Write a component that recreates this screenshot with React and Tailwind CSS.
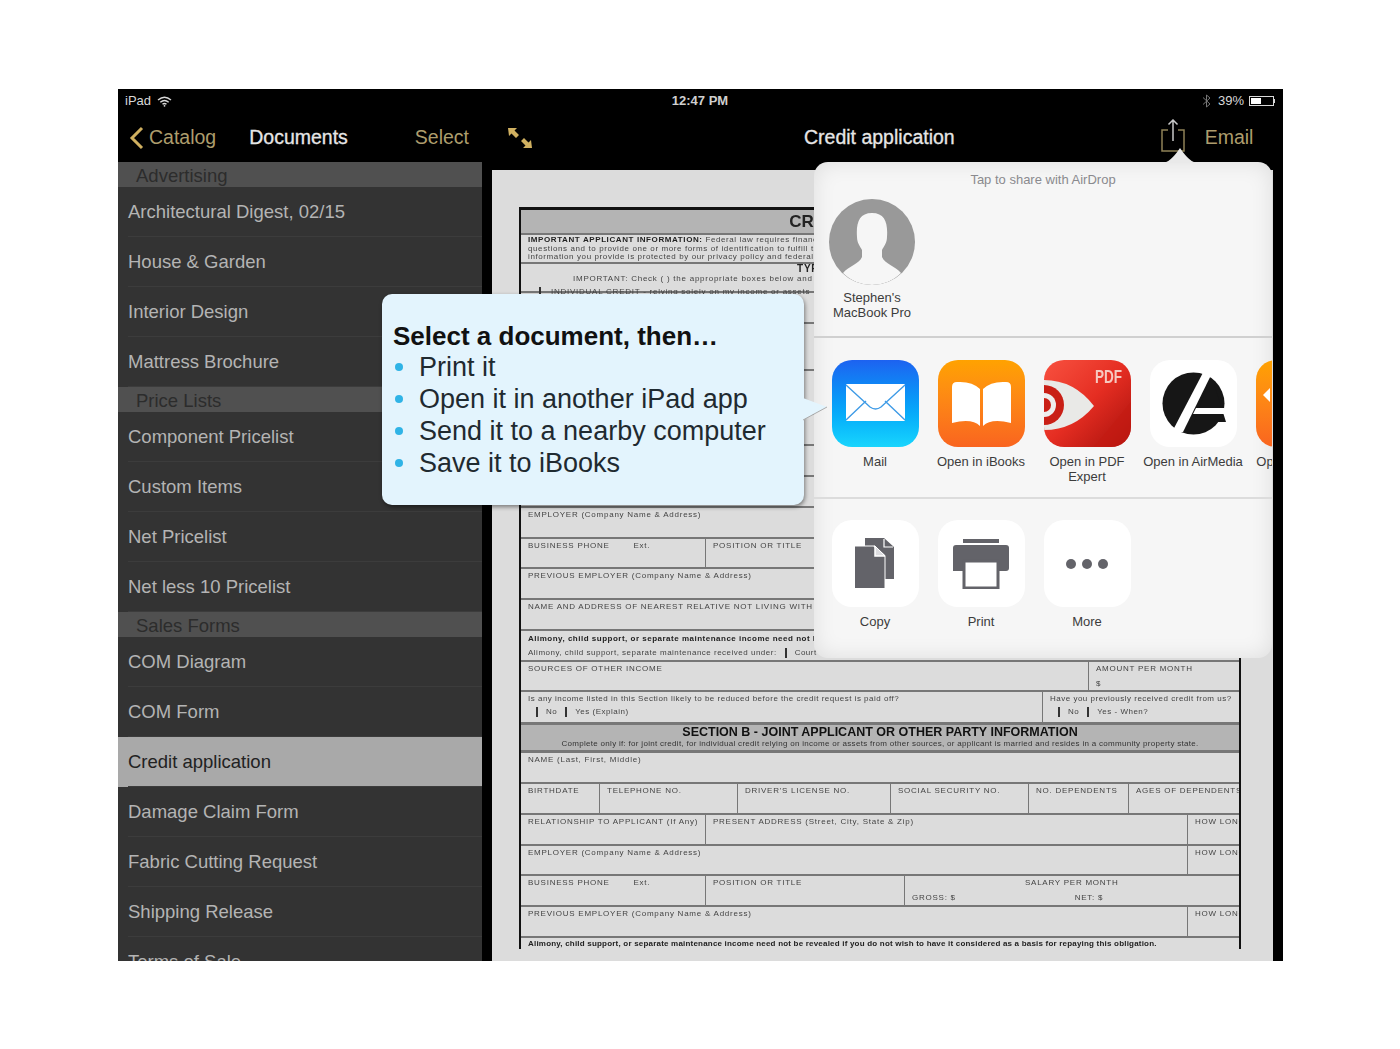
import React from "react";

const font = { fontFamily: '"Liberation Sans", Arial, sans-serif' };

const sidebar = [
  { section: "Advertising" },
  { label: "Architectural Digest, 02/15" },
  { label: "House & Garden" },
  { label: "Interior Design" },
  { label: "Mattress Brochure" },
  { section: "Price Lists" },
  { label: "Component Pricelist" },
  { label: "Custom Items" },
  { label: "Net Pricelist" },
  { label: "Net less 10 Pricelist" },
  { section: "Sales Forms" },
  { label: "COM Diagram" },
  { label: "COM Form" },
  { label: "Credit application", selected: true },
  { label: "Damage Claim Form" },
  { label: "Fabric Cutting Request" },
  { label: "Shipping Release" },
  { label: "Terms of Sale" },
];

const bullets = ["Print it", "Open it in another iPad app", "Send it to a nearby computer", "Save it to iBooks"];

const MailIcon = () => (
  <div className="h-[87px] w-[87px] overflow-hidden rounded-[20px] bg-gradient-to-b from-[#1d62f0] to-[#19d5fd]">
    <svg viewBox="0 0 87 87" className="h-full w-full">
      <rect x="14" y="24" width="59" height="37" rx="1" fill="#fff" />
      <path d="M14 25 L38 47 Q43.5 51 49 47 L73 25 M14 60 L34 41 M73 60 L53 41" fill="none" stroke="#3f9be6" strokeWidth="1.4" />
    </svg>
  </div>
);

const BooksIcon = () => (
  <div className="h-[87px] w-[87px] overflow-hidden rounded-[20px] bg-gradient-to-b from-[#ffa200] to-[#f9641f]">
    <svg viewBox="0 0 87 87" className="h-full w-full">
      <path d="M14 27 Q14 22 19 22 Q34 21 42 29 L42 66 Q34 58 14 63 Z" fill="#fff" />
      <path d="M73 27 Q73 22 68 22 Q53 21 45 29 L45 66 Q53 58 73 63 Z" fill="#fff" />
    </svg>
  </div>
);

const PdfIcon = () => (
  <div className="relative h-[87px] w-[87px] overflow-hidden rounded-[20px] bg-gradient-to-br from-[#f8503f] via-[#e52d22] to-[#a80f0b]">
    <svg viewBox="0 0 87 87" className="absolute inset-0 h-full w-full">
      <path d="M50 87 L87 42 L87 87 Z" fill="#c51a12" opacity="0.6" />
      <path d="M0 20 Q30 20 50 46 Q30 70 0 70 Z" fill="#e9e9e7" />
      <path d="M0 25 A20 20 0 0 1 0 65 Z" fill="#c91f16" />
      <path d="M0 33 A12 12 0 0 1 0 57 Z" fill="#eee" />
      <path d="M0 38 A7 7 0 0 1 0 52 Z" fill="#c91f16" />
    </svg>
    <span className="absolute right-[9px] top-[8px] text-[18px] font-bold leading-none text-[#f6c9c0] [transform:scaleX(0.75)] [transform-origin:right]">PDF</span>
  </div>
);

const AirMediaIcon = () => (
  <div className="h-[87px] w-[87px] overflow-hidden rounded-[20px] bg-white">
    <svg viewBox="0 0 87 87" className="h-full w-full">
      <circle cx="43.5" cy="43.5" r="31" fill="#161616" />
      <path d="M57 5 L66 5 L33 72 L22 72 Z" fill="#fff" />
      <path d="M58 24 L64 24 L76 62 L44 62 Z" fill="#161616" />
      <path d="M46 48 L74 48 L74 54 L43 54 Z" fill="#fff" />
    </svg>
  </div>
);

const FifthIcon = () => (
  <div className="relative h-[87px] w-[87px] overflow-hidden rounded-[20px] bg-gradient-to-b from-[#ffa200] to-[#f9641f]">
    <svg viewBox="0 0 87 87" className="absolute inset-0 h-full w-full">
      <path d="M7 35 L14 28 L14 42 Z" fill="#fff" />
    </svg>
  </div>
);

const ActionTile = ({ children }) => (
  <div className="flex h-[87px] w-[87px] items-center justify-center rounded-[20px] bg-white">{children}</div>
);

const CopyIcon = () => (
  <svg width="40" height="52" viewBox="0 0 40 52">
    <path d="M10 0 H29 L39 9 V41 H30 V50 H0 V8 H10 Z" fill="#636369" />
    <path d="M19 8 L30 18" stroke="#fff" strokeWidth="1.5" fill="none" />
    <path d="M20 8 V18 H30" stroke="#fff" strokeWidth="1.5" fill="#dcdcdf" />
    <path d="M0 8 H20 L30 18 V50" stroke="#fff" strokeWidth="1" fill="none" />
    <path d="M29 1 V9 H38" stroke="#fff" strokeWidth="1.2" fill="none" />
  </svg>
);

const PrintIcon = () => (
  <svg width="56" height="50" viewBox="0 0 56 50">
    <rect x="10" y="0" width="36" height="4" fill="#636369" />
    <path d="M3 6 H53 Q56 6 56 9 V29 Q56 32 53 32 H0 V9 Q0 6 3 6 Z" fill="#636369" />
    <rect x="11" y="22" width="34" height="27" fill="#fff" stroke="#636369" strokeWidth="3" />
  </svg>
);

const MoreIcon = () => (
  <div className="flex gap-[6px]">
    <span className="h-[10px] w-[10px] rounded-full bg-[#636369]" />
    <span className="h-[10px] w-[10px] rounded-full bg-[#636369]" />
    <span className="h-[10px] w-[10px] rounded-full bg-[#636369]" />
  </div>
);

const apps = [
  { label: "Mail", icon: <MailIcon /> },
  { label: "Open in iBooks", icon: <BooksIcon /> },
  { label: "Open in PDF Expert", icon: <PdfIcon /> },
  { label: "Open in AirMedia", icon: <AirMediaIcon /> },
  { label: "Open in Kindle", icon: <FifthIcon /> },
];

const actions = [
  { label: "Copy", icon: <CopyIcon /> },
  { label: "Print", icon: <PrintIcon /> },
  { label: "More", icon: <MoreIcon /> },
];

const ShareItem = ({ icon, label }) => (
  <div className="flex w-[106px] shrink-0 flex-col items-center">
    {icon}
    <div className="mt-[7px] w-[106px] whitespace-normal text-center text-[13px] leading-[15px] text-[#3c3c3c]">{label}</div>
  </div>
);

// one ruled row of the paper form, cells = [text, width] pairs
const FormRow = ({ cells, h = 30.7 }) => (
  <div className="flex border-b-2 border-[#777]" style={{ height: h }}>
    {cells.map(([text, width, extra], i) => (
      <div
        key={i}
        className={`overflow-hidden whitespace-pre border-[#777] pl-[7px] pt-[2px] text-[8px] leading-[10px] tracking-[0.75px] text-[#444] ${i > 0 ? "border-l" : ""}`}
        style={{ width: width || undefined, flex: width ? "none" : 1 }}
      >
        {text}
        {extra && <div className="mt-[5px]">{extra}</div>}
      </div>
    ))}
  </div>
);

const Box = () => <span className="mx-[8px] inline-block h-[10px] w-[2px] bg-[#333] align-middle" />;

const PaperForm = () => (
  <div className="w-[722px] border-x-2 border-t-[3px] border-[#111] bg-[#dcdcdc] blur-[0.35px]" style={font}>
    <div className="flex h-[25px] items-center justify-center border-b-2 border-[#777] bg-[#b4b4b4] text-[17px] font-bold text-[#222]">
      CREDIT APPLICATION
    </div>
    <div className="h-[29px] border-b-2 border-[#777] px-[7px] pt-[1px] text-[8px] leading-[8.5px] tracking-[0.6px] text-[#444]">
      <div><b className="text-[#222]">IMPORTANT APPLICANT INFORMATION:</b>  Federal law requires financial institutions to obtain, verify and record information</div>
      <div>questions and to provide one or more forms of identification to fulfill this requirement and your</div>
      <div>information you provide is protected by our privacy policy and federal law.</div>
    </div>
    <div className="h-[29px] border-b-2 border-[#777] text-[8px] leading-[10px] tracking-[0.75px] text-[#444]">
      <div className="text-center text-[10px] font-bold text-[#222]">TYPE OF CREDIT REQUESTED</div>
      <div className="pl-[52px]">IMPORTANT: Check ( ) the appropriate boxes below and complete</div>
      <div className="mt-[3px] flex items-center pl-[10px]"><Box /><span className="ml-[2px]">INDIVIDUAL CREDIT - relying solely on my income or assets</span></div>
    </div>
    <FormRow cells={[[""]]} h={31} />
    <FormRow cells={[["", 660], ["SIF"]]} h={47} />
    <FormRow cells={[[""]]} h={44} />
    <FormRow cells={[["", 660], ["NS"]]} h={31} />
    <FormRow cells={[[""]]} h={31} />
    <FormRow cells={[["", 660], ["ar"]]} h={31} />
    <FormRow cells={[["EMPLOYER (Company Name & Address)"]]} />
    <FormRow cells={[["BUSINESS PHONE        Ext.", 184], ["POSITION OR TITLE"]]} />
    <FormRow cells={[["PREVIOUS EMPLOYER (Company Name & Address)"]]} />
    <FormRow cells={[["NAME AND ADDRESS OF NEAREST RELATIVE NOT LIVING WITH YOU"]]} />
    <div className="h-[31px] border-b-2 border-[#777] pl-[7px] pt-[1px] text-[8px] leading-[14px] tracking-[0.5px] text-[#444]">
      <div className="font-bold text-[#222]">Alimony, child support, or separate maintenance income need not be revealed</div>
      <div className="flex items-center">
        Alimony, child support, separate maintenance received under:<Box />Court Order<Box />Written Agreement<Box />Oral Understanding
      </div>
    </div>
    <FormRow cells={[["SOURCES OF OTHER INCOME", 567], ["AMOUNT PER MONTH", null, "$"]]} />
    <div className="flex h-[30px] text-[8px] leading-[10px] tracking-[0.5px] text-[#444]">
      <div className="w-[521px] pl-[7px] pt-[2px]">
        <div>Is any income listed in this Section likely to be reduced before the credit request is paid off?</div>
        <div className="mt-[3px] flex items-center"><Box />No<Box />Yes (Explain)</div>
      </div>
      <div className="flex-1 border-l border-[#777] pl-[7px] pt-[2px]">
        <div>Have you previously received credit from us?</div>
        <div className="mt-[3px] flex items-center"><Box />No<Box />Yes - When?</div>
      </div>
    </div>
    <div className="h-[31px] border-y-[3px] border-[#777] bg-[#b4b4b4] text-center">
      <div className="text-[12.5px] font-bold leading-[14px] text-[#111]">SECTION B - JOINT APPLICANT OR OTHER PARTY INFORMATION</div>
      <div className="text-[8px] leading-[10px] tracking-[0.3px] text-[#333]">Complete only if: for joint credit, for individual credit relying on income or assets from other sources, or applicant is married and resides in a community property state.</div>
    </div>
    <FormRow cells={[["NAME (Last, First, Middle)"]]} />
    <FormRow cells={[["BIRTHDATE", 78], ["TELEPHONE NO.", 138], ["DRIVER'S LICENSE NO.", 153], ["SOCIAL SECURITY NO.", 138], ["NO. DEPENDENTS", 100], ["AGES OF DEPENDENTS"]]} />
    <FormRow cells={[["RELATIONSHIP TO APPLICANT (If Any)", 184], ["PRESENT ADDRESS (Street, City, State & Zip)", 482], ["HOW LONG"]]} />
    <FormRow cells={[["EMPLOYER (Company Name & Address)", 666], ["HOW LONG"]]} />
    <FormRow cells={[["BUSINESS PHONE        Ext.", 184], ["POSITION OR TITLE", 199], ["                                      SALARY PER MONTH", null, "GROSS: $                                        NET: $"]]} />
    <FormRow cells={[["PREVIOUS EMPLOYER (Company Name & Address)", 666], ["HOW LONG"]]} />
    <div className="pl-[7px] pt-[1px] text-[8px] font-bold leading-[10px] tracking-[0.2px] text-[#222]">
      Alimony, child support, or separate maintenance income need not be revealed if you do not wish to have it considered as a basis for repaying this obligation.
    </div>
  </div>
);

export default function App() {
  return (
    <div className="min-h-[1049px] bg-white pl-[118px] pt-[89px]" style={font}>
      <div className="relative h-[872px] w-[1165px] overflow-hidden bg-black">
        {/* status bar */}
        <div className="flex h-[24px] items-center justify-between pl-[7px] pr-[8px] text-[13px] text-[#d8d8d8]">
          <div className="flex w-[300px] items-center gap-[6px]">
            iPad
            <svg width="15" height="11" viewBox="0 0 15 11" fill="none" stroke="#d8d8d8" strokeWidth="1.4">
              <path d="M1 4 Q7.5 -1.5 14 4 M3.3 6.2 Q7.5 2.6 11.7 6.2 M5.5 8.3 Q7.5 6.6 9.5 8.3" />
              <circle cx="7.5" cy="9.8" r="0.9" fill="#d8d8d8" stroke="none" />
            </svg>
          </div>
          <div className="font-bold text-[#d0d0d0]">12:47 PM</div>
          <div className="flex w-[300px] items-center justify-end gap-[5px]">
            <svg width="9" height="14" viewBox="0 0 9 14" fill="none" stroke="#777" strokeWidth="1">
              <path d="M1 3.5 L8 10 L4.5 13 V1 L8 4 L1 10.5" />
            </svg>
            <span className="ml-[2px]">39%</span>
            <div className="flex items-center">
              <div className="h-[10px] w-[25px] border border-[#d8d8d8] p-[1px]">
                <div className="h-full w-[10px] bg-white" />
              </div>
              <div className="h-[4px] w-[1px] bg-[#d8d8d8]" />
            </div>
          </div>
        </div>

        {/* nav bar */}
        <div className="flex h-[49px] items-center text-[19.5px]">
          <div className="flex w-[364px] items-center">
            <svg width="16" height="24" viewBox="0 0 16 24" fill="none" stroke="#d0b060" strokeWidth="3" className="ml-[11px]">
              <path d="M13 2 L3 12 L13 22" />
            </svg>
            <span className="ml-[4px] text-[#ad9d6d]">Catalog</span>
            <span className="ml-[33px] text-[#e6e6e6] [-webkit-text-stroke:0.3px_#e6e6e6]">Documents</span>
            <span className="ml-[67px] text-[#ad9d6d]">Select</span>
          </div>
          <svg width="26" height="24" viewBox="0 0 26 24" className="ml-[25px]" fill="#d0b060">
            <path d="M1 2 L10 2 L7.5 4.5 L12 9 L9 12 L4.5 7.5 L2 10 Z" />
            <path d="M25 22 L16 22 L18.5 19.5 L14 15 L17 12 L21.5 16.5 L24 14 Z" />
          </svg>
          <div className="ml-[271px] text-[#e6e6e6] [-webkit-text-stroke:0.3px_#e6e6e6]">Credit application</div>
          <svg width="26" height="34" viewBox="0 0 26 34" fill="none" stroke="#8f8157" strokeWidth="1.5" className="ml-[205px] -mt-[3px]">
            <path d="M8 11 H2 V32 H24 V11 H18" />
            <path d="M13 22 V1 M8.5 5.5 L13 1 L17.5 5.5" stroke="#c8c8c8" />
          </svg>
          <span className="ml-[19px] text-[#ad9d6d]">Email</span>
        </div>

        {/* body */}
        <div className="flex">
          <div className="w-[364px] shrink-0 bg-[#333333]">
            {sidebar.map((row) =>
              row.section ? (
                <div key={row.section} className="h-[25px] bg-[#505050] pl-[18px] text-[18.5px] leading-[27px] text-[#2c2c2c]">
                  {row.section}
                </div>
              ) : (
                <div
                  key={row.label}
                  className={`flex h-[50px] items-center pl-[10px] text-[18.5px] ${row.selected ? "bg-[#a9a9a9] text-[#222]" : "text-[#b4b4b4]"}`}
                >
                  <div className="flex h-full w-full items-center border-b border-[#3c3c3c]">{row.label}</div>
                </div>
              )
            )}
          </div>
          <div className="ml-[10px] mt-[8px] h-[800px] w-[781px] shrink-0 overflow-hidden bg-[#dcdcdc] pl-[27px] pt-[37px]">
            <PaperForm />
          </div>
        </div>

        {/* share popover */}
        <div className="absolute left-[696px] top-[73px] h-[496px] w-[458px] rounded-[14px] bg-[#f6f6f6] text-[#3c3c3c] shadow-[inset_0_0_22px_rgba(0,0,0,0.1)]">
          <svg width="36" height="15" viewBox="0 0 36 15" className="absolute left-[348px] top-[-14px]" fill="#e9e9e9">
            <path d="M0 15 Q8 15 18 0 Q28 15 36 15 Z" />
          </svg>
          <div className="h-[176px] overflow-hidden border-b-2 border-[#d0d0d0]">
            <div className="pt-[10px] text-center text-[13px] leading-[16px] text-[#8a8a8e]">Tap to share with AirDrop</div>
            <div className="ml-[11px] mt-[11px] w-[94px]">
              <div className="relative mx-auto h-[86px] w-[86px] overflow-hidden rounded-full bg-[#999999]">
                <svg viewBox="0 0 86 86" className="absolute inset-0 h-full w-full">
                  <path d="M43 14 C30 14 27 24 28 38 C28 44 31 47 33 51 L33 58 C30 65 20 67 14 74 C22 82 32 86 43 86 C54 86 64 82 72 74 C66 67 56 65 53 58 L53 51 C55 47 58 44 58 38 C59 24 56 14 43 14 Z" fill="#f6f6f6" />
                </svg>
              </div>
              <div className="mt-[5px] whitespace-nowrap text-center text-[13px] leading-[15px]">Stephen's<br />MacBook Pro</div>
            </div>
          </div>
          <div className="flex h-[161px] overflow-hidden border-b-2 border-[#dcdcdc] pl-[8px] pt-[22px]">
            {apps.map((app) => (
              <ShareItem key={app.label} icon={app.icon} label={app.label} />
            ))}
          </div>
          <div className="flex pl-[8px] pt-[21px]">
            {actions.map((a) => (
              <ShareItem key={a.label} icon={<ActionTile>{a.icon}</ActionTile>} label={a.label} />
            ))}
          </div>
        </div>

        {/* callout */}
        <div className="absolute left-[264px] top-[205px] h-[211px] w-[422px] rounded-[10px] bg-[#e3f4fd] pl-[11px] pt-[27px] shadow-[1px_2px_4px_rgba(0,0,0,0.45)]">
          <div className="text-[26px] font-bold leading-[30px] text-[#111]">Select a document, then…</div>
          {bullets.map((b) => (
            <div key={b} className="flex h-[32px] items-center text-[27px] text-[#1f2a30]">
              <span className="ml-[2px] mr-[16px] h-[8px] w-[8px] rounded-full bg-[#2fb3e6]" />
              {b}
            </div>
          ))}
          <svg width="26" height="26" viewBox="0 0 26 26" className="absolute left-[421px] top-[101px]">
            <path d="M0 3 L24 12 L0 25 Z" fill="#e3f4fd" />
            <path d="M0 25 L24 12" stroke="#aaa" strokeWidth="1" fill="none" />
          </svg>
        </div>
      </div>
    </div>
  );
}
